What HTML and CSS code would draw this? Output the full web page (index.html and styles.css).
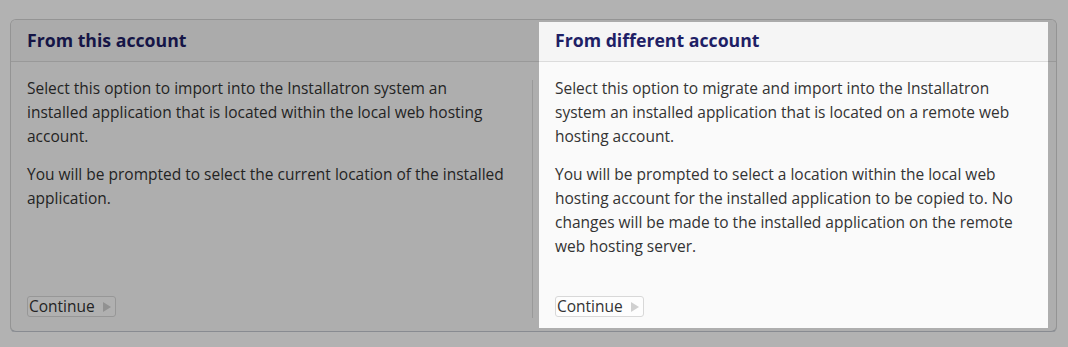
FILE: index.html
```html
<!DOCTYPE html>
<html>
<head>
<meta charset="utf-8">
<link rel="stylesheet" href="styles.css">
</head>
<body>
<div class="page">
  <div class="box">
    <div class="col col-left">
      <div class="head">From this account</div>
      <div class="body">
        <div class="content">
          <p>Select this option to import into the Installatron system an installed application that is located within the local web hosting account.</p>
          <p>You will be prompted to select the current location of the installed application.</p>
          <button class="btn">Continue <span class="tri"></span></button>
        </div>
        <div class="divider"></div>
      </div>
    </div>
    <div class="col col-right">
      <div class="head">From different account</div>
      <div class="body">
        <div class="content">
          <p>Select this option to migrate and import into the Installatron system an installed application that is located on a remote web hosting account.</p>
          <p>You will be prompted to select a location within the local web hosting account for the installed application to be copied to. No changes will be made to the installed application on the remote web hosting server.</p>
          <button class="btn">Continue <span class="tri"></span></button>
        </div>
      </div>
    </div>
  </div>
</div>
<div class="spotlight"></div>
</body>
</html>
```
FILE: styles.css
```css
html, body {
  margin: 0;
  padding: 0;
  background: #ffffff;
}
body {
  font-family: "Open Sans", "Liberation Sans", sans-serif;
  color: #333333;
  font-size: 15.5px;
}
.page {
  padding: 19px 11px 0 10px;
}
.box {
  box-sizing: border-box;
  height: 313px;
  display: grid;
  grid-template-columns: 522px 1fr;
  border: 1px solid #d4d4d4;
  border-bottom-color: #c3c8d0;
  border-radius: 6px;
  box-shadow: 0 1px 0 #d8dbe0;
  overflow: hidden;
  background: #fafafa;
}
.col {
  display: flex;
  flex-direction: column;
}
.head {
  height: 41px;
  line-height: 41px;
  background: #f5f5f5;
  border-bottom: 1px solid #dcdcdc;
  font-weight: 700;
  font-size: 17.7px;
  color: #1f1f66;
  padding-left: 16px;
}
.col-right .head {
  padding-left: 22px;
}
.body {
  flex: 1;
  display: flex;
}
.content {
  flex: 1;
  display: flex;
  flex-direction: column;
  align-items: flex-start;
  padding: 15px 16px 14px 16px;
}
.col-left .content {
  padding-right: 24px;
}
.col-right .content {
  padding-left: 22px;
}
.content p {
  margin: 0 0 15px 0;
  line-height: 23.8px;
}
.divider {
  width: 1px;
  background: #dcdcdc;
  margin: 18px 0 13px 0;
}
.btn {
  margin-top: auto;
  font-family: "Open Sans", "Liberation Sans", sans-serif;
  font-size: 15.5px;
  color: #333;
  background: #fdfdfd;
  border: 1px solid #d8d8d8;
  border-radius: 3px;
  height: 21px;
  padding: 0 4px 0 1px;
  display: flex;
  align-items: center;
  gap: 8px;
  line-height: 19px;
}
.tri {
  width: 0;
  height: 0;
  border-top: 5px solid transparent;
  border-bottom: 5px solid transparent;
  border-left: 8px solid #d0d0d0;
}
.spotlight {
  position: absolute;
  left: 539px;
  top: 22px;
  width: 509px;
  height: 306px;
  box-shadow: 0 0 0 3000px rgba(0, 0, 0, 0.3);
  pointer-events: none;
}
```
